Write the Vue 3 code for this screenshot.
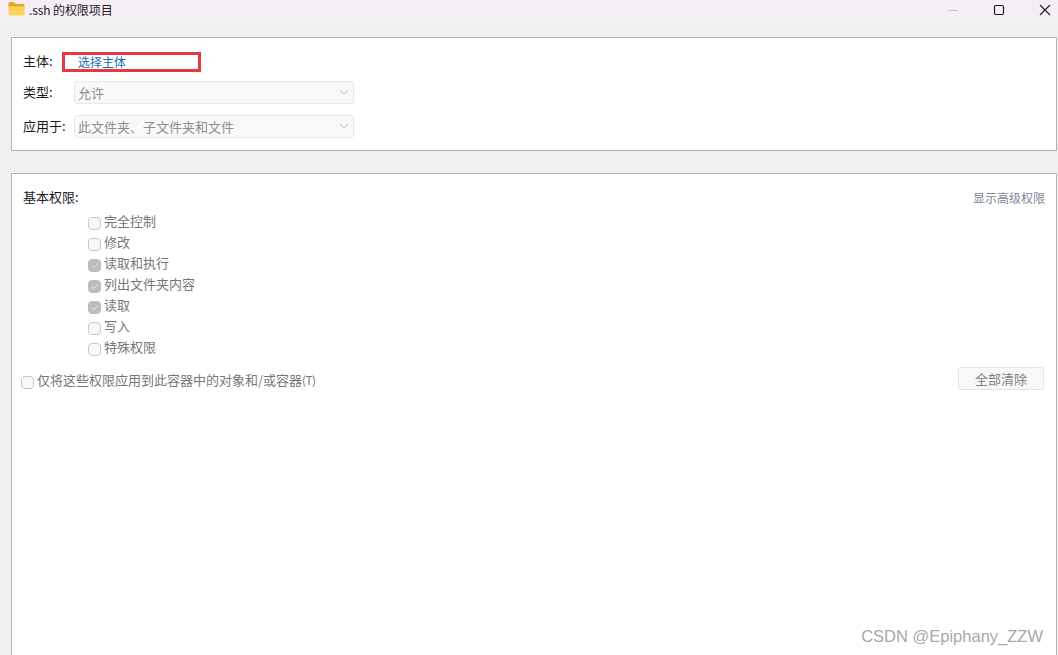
<script setup>
const perms = [
  { label: '完全控制', on: false },
  { label: '修改', on: false },
  { label: '读取和执行', on: true },
  { label: '列出文件夹内容', on: true },
  { label: '读取', on: true },
  { label: '写入', on: false },
  { label: '特殊权限', on: false },
]
</script>

<template>
  <div class="win">
    <header class="titlebar">
      <div class="title-left">
        <svg class="folder" width="17" height="15" viewBox="0 0 17 15">
          <path d="M0.5 2.5 Q0.5 1 2 1 H6 L8 3 H15 Q16.5 3 16.5 4.5 V6 H0.5 Z" fill="#e9a91f" />
          <path d="M0.5 5.5 H16.5 V13 Q16.5 14.5 15 14.5 H2 Q0.5 14.5 0.5 13 Z" fill="#fbd45e" />
        </svg>
        <span class="title-text">.ssh 的权限项目</span>
      </div>
      <div class="controls">
        <span class="ctl"><svg width="12" height="12" viewBox="0 0 12 12"><path d="M1 6.5 H11" stroke="#c9c6ca" stroke-width="1" /></svg></span>
        <span class="ctl"><svg width="12" height="12" viewBox="0 0 12 12"><rect x="1.5" y="1.5" width="9" height="9" rx="1.2" fill="none" stroke="#1c1c1c" stroke-width="1.2" /></svg></span>
        <span class="ctl"><svg width="12" height="12" viewBox="0 0 12 12"><path d="M1 1 L11 11 M11 1 L1 11" stroke="#1c1c1c" stroke-width="1.1" /></svg></span>
      </div>
    </header>

    <main class="body">
      <section class="panel top">
        <div class="row r1">
          <span class="lbl">主体:</span>
          <a class="picker">选择主体</a>
        </div>
        <div class="row r2">
          <span class="lbl">类型:</span>
          <div class="select s1">
            <span>允许</span>
            <svg width="10" height="6" viewBox="0 0 10 6"><path d="M1 1 L5 5 L9 1" fill="none" stroke="#b5b5b5" /></svg>
          </div>
        </div>
        <div class="row r3">
          <span class="lbl">应用于:</span>
          <div class="select s2">
            <span>此文件夹、子文件夹和文件</span>
            <svg width="10" height="6" viewBox="0 0 10 6"><path d="M1 1 L5 5 L9 1" fill="none" stroke="#b5b5b5" /></svg>
          </div>
        </div>
      </section>

      <section class="panel bottom">
        <div class="head">
          <span class="heading">基本权限:</span>
          <a class="adv">显示高级权限</a>
        </div>
        <ul class="perms">
          <li v-for="p in perms" :key="p.label" class="perm">
            <span class="box" :class="{ on: p.on }">
              <svg v-if="p.on" width="9" height="9" viewBox="0 0 9 9"><path d="M1.5 4.7 L3.6 6.8 L7.6 2.3" fill="none" stroke="#e4e4e4" stroke-width="1" /></svg>
            </span>
            <span class="perm-text">{{ p.label }}</span>
          </li>
        </ul>
        <div class="foot">
          <label class="only">
            <span class="box"></span>
            <span class="perm-text">仅将这些权限应用到此容器中的对象和/或容器<span class="key">(T)</span></span>
          </label>
          <button class="clear" disabled>全部清除</button>
        </div>
      </section>
    </main>

    <div class="mark">CSDN @Epiphany_ZZW</div>
  </div>
</template>

<style>
html, body { margin: 0; height: 100%; overflow: hidden; background: #f0f0f0; }
</style>

<style scoped>
.win {
  position: relative;
  width: 1058px;
  height: 655px;
  overflow: hidden;
  background: #f0f0f0;
  display: flex;
  flex-direction: column;
  font-family: "Noto Sans CJK SC", "Liberation Sans", sans-serif;
  font-size: 13px;
  color: #1a1a1a;
}
.titlebar {
  height: 26px;
  flex: none;
  display: flex;
  justify-content: space-between;
  background: linear-gradient(180deg, #f6edf6 0%, #f6eef6 62%, #f0f0f0 100%);
}
.title-left {
  display: flex;
  align-items: center;
  height: 20px;
  padding-left: 8px;
  gap: 4px;
}
.folder { margin-top: -3px; }
.title-text { font-size: 12px; color: #222; line-height: 20px; letter-spacing: -0.1px; }
.controls {
  display: flex;
  height: 20px;
  align-items: center;
  gap: 34px;
  padding-right: 7px;
}
.ctl { display: flex; width: 12px; height: 12px; }
.body {
  flex: 1;
  min-height: 0;
  padding: 11px 1px 0 11px;
  display: flex;
  flex-direction: column;
  gap: 22px;
}
.panel {
  background: #fff;
  border: 1px solid #b4b4b4;
  box-sizing: border-box;
}
.top {
  height: 114px;
  flex: none;
  padding-left: 11px;
}
.row { display: flex; align-items: center; }
.r1 { margin-top: 14px; height: 20px; }
.r2 { margin-top: 8px; height: 24px; }
.r3 { margin-top: 10px; height: 24px; }
.lbl { width: 51px; flex: none; color: #1a1a1a; line-height: 20px; }
.r1 .lbl { width: 39px; padding-bottom: 2px; }
.picker {
  box-sizing: border-box;
  width: 139px;
  height: 20px;
  border: 3px solid #e5393f;
  padding-left: 13px;
  font-size: 12px;
  line-height: 13px;
  color: #1f69b3;
}
.select {
  box-sizing: border-box;
  width: 280px;
  height: 23px;
  background: #f9f9f9;
  border: 1px solid #e8e8e8;
  border-radius: 3px;
  display: flex;
  align-items: center;
  justify-content: space-between;
  padding: 0 4px 0 3px;
  color: #8d8d8d;
}
.bottom {
  flex: 1;
  min-height: 0;
  margin-bottom: -4px;
  padding: 11px 11px 0 10px;
}
.head {
  display: flex;
  justify-content: space-between;
  align-items: center;
  height: 22px;
  padding-left: 1px;
}
.heading { color: #1a1a1a; }
.adv { font-size: 12px; color: #7a8896; margin-top: 3px; }
.perms {
  list-style: none;
  margin: 3px 0 0;
  padding: 0 0 0 66px;
  display: flex;
  flex-direction: column;
}
.perm {
  height: 21px;
  display: flex;
  align-items: center;
  gap: 3px;
}
.box {
  box-sizing: border-box;
  width: 13px;
  height: 13px;
  margin-top: 5px;
  border: 1px solid #c8c8c8;
  border-radius: 4px;
  background: #f9f9f9;
  display: flex;
  align-items: center;
  justify-content: center;
  flex: none;
}
.box.on { background: #bdbdbd; border-color: #bdbdbd; }
.perm-text { color: #777; line-height: 20px; }
.key { font-size: 11.5px; letter-spacing: -0.4px; }
.foot {
  display: flex;
  justify-content: space-between;
  align-items: flex-start;
  margin-top: 10px;
}
.only { display: flex; align-items: center; gap: 3px; margin-top: 3px; margin-left: -1px; }
.clear {
  box-sizing: border-box;
  width: 86px;
  height: 23px;
  margin-right: 1px;
  background: #f8f8f8;
  border: 1px solid #e4e4e4;
  border-radius: 3px;
  color: #7f7f7f;
  font: inherit;
  padding: 0;
}
.mark {
  position: absolute;
  right: 15px;
  top: 626px;
  font-family: "Liberation Sans", sans-serif;
  font-size: 16.5px;
  line-height: 20px;
  color: #a8a8a8;
}
</style>
